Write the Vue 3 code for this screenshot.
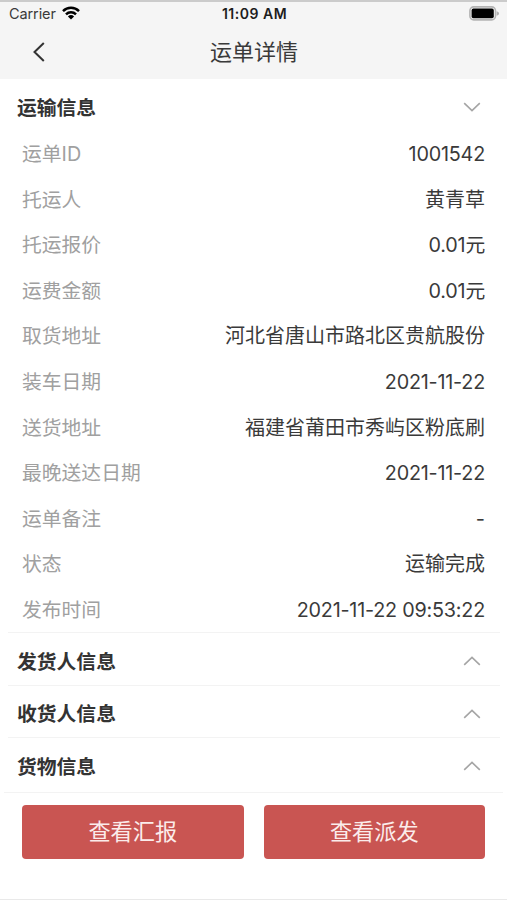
<script setup>
import { ref } from 'vue'

const sections = ref([
  {
    title: '运输信息',
    open: true,
    rows: [
      { label: '运单ID', value: '1001542' },
      { label: '托运人', value: '黄青草' },
      { label: '托运报价', value: '0.01元' },
      { label: '运费金额', value: '0.01元' },
      { label: '取货地址', value: '河北省唐山市路北区贵航股份' },
      { label: '装车日期', value: '2021-11-22' },
      { label: '送货地址', value: '福建省莆田市秀屿区粉底刷' },
      { label: '最晚送达日期', value: '2021-11-22' },
      { label: '运单备注', value: '-' },
      { label: '状态', value: '运输完成' },
      { label: '发布时间', value: '2021-11-22 09:53:22' },
    ],
  },
  { title: '发货人信息', open: false, rows: [] },
  { title: '收货人信息', open: false, rows: [] },
  { title: '货物信息', open: false, rows: [] },
])

function toggle(section) {
  section.open = !section.open
}

function isNumeric(value) {
  return /^\d/.test(value)
}
</script>

<template>
  <div class="page">
    <header class="top">
      <div class="status-bar">
        <div class="carrier">
          <span>Carrier</span>
          <svg class="wifi" viewBox="0 0 18 14">
            <g fill="none" stroke="#000" stroke-width="2.5">
              <path d="M1 5.1a11.4 11.4 0 0 1 16 0" />
              <path d="M4 8.4a7.1 7.1 0 0 1 10 0" />
            </g>
            <path d="M9 13.6 5.9 10.5a4.5 4.5 0 0 1 6.2 0z" />
          </svg>
        </div>
        <span class="time">11:09 AM</span>
        <svg class="battery" viewBox="0 0 31 15">
          <rect x="0.9" y="0.9" width="25.6" height="13" rx="3.8" fill="#f5f5f5" stroke="#b4b4b4" stroke-width="1.6" />
          <rect x="2.6" y="2.6" width="22.2" height="9.6" rx="1.8" />
          <path d="M27.6 5.2c1.8.5 2.4 1.3 2.4 2.3s-.6 1.8-2.4 2.3z" fill="#b0b0b0" />
        </svg>
      </div>
      <div class="nav-bar">
        <svg class="back" viewBox="0 0 12 20">
          <path d="M10.8 1 1.5 10l9.3 9" />
        </svg>
        <h1>运单详情</h1>
      </div>
    </header>

    <main>
      <section v-for="section in sections" :key="section.title" :class="{ open: section.open }">
        <div class="section-head" @click="toggle(section)">
          <h2>{{ section.title }}</h2>
          <svg class="arrow" :class="{ down: section.open }" viewBox="0 0 18 10">
            <path d="M1.2 8.8 9 1.4l7.8 7.4" />
          </svg>
        </div>
        <dl v-if="section.open">
          <div v-for="row in section.rows" :key="row.label" class="row">
            <dt>{{ row.label }}</dt>
            <dd :class="{ numeric: isNumeric(row.value) }">{{ row.value }}</dd>
          </div>
        </dl>
      </section>
    </main>

    <footer>
      <button type="button">查看汇报</button>
      <button type="button">查看派发</button>
    </footer>
  </div>
</template>

<style>
body {
  margin: 0;
}
</style>

<style scoped>
.page {
  display: flex;
  flex-direction: column;
  box-sizing: border-box;
  height: 900px;
  background: #fff;
  border-bottom: 1px solid #e9e9e9;
  font-family: Inter, 'Noto Sans CJK SC', sans-serif;
  color: #3a3a3a;
  overflow: hidden;
}

.top {
  box-sizing: border-box;
  height: 79px;
  border-top: 2px solid #cbcbcb;
  background: #f5f5f5;
  flex-shrink: 0;
}

.status-bar {
  display: grid;
  grid-template-columns: 1fr auto 1fr;
  align-items: center;
  height: 23px;
  padding: 0 7px 0 9px;
  font-size: 14.5px;
  line-height: 24px;
}

.carrier {
  display: flex;
  align-items: center;
  gap: 6px;
  letter-spacing: -0.1px;
}

.wifi {
  width: 18px;
  height: 14px;
  margin-top: -2px;
}

.time {
  font-size: 14px;
  font-weight: 600;
  letter-spacing: 0.5px;
  color: #1d1d1d;
}

.battery {
  width: 31px;
  height: 15px;
  margin-top: -1px;
  justify-self: end;
}

.nav-bar {
  display: grid;
  grid-template-columns: 1fr auto 1fr;
  align-items: center;
  height: 53px;
}

.back {
  width: 12px;
  height: 20px;
  margin-left: 33px;
  fill: none;
  stroke: #333;
  stroke-width: 2;
}

h1 {
  grid-column: 2;
  margin: 0;
  padding-left: 1px;
  font-size: 22px;
  font-weight: 400;
  line-height: 50px;
}

section {
  box-sizing: border-box;
  height: 52.7px;
  margin: 0 7px 0 8px;
  border-bottom: 1px solid #f3f3f3;
}

section.open {
  height: 554px;
}

section:last-child {
  height: 55px;
  margin: 0 4px;
  padding: 0 3px 0 4px;
}

.section-head {
  display: flex;
  align-items: center;
  justify-content: space-between;
  height: 52px;
  padding: 0 19px 0 9px;
}

h2 {
  margin: 0;
  padding-top: 5px;
  font-size: 19.8px;
  font-weight: 700;
  line-height: 52px;
  color: #333;
}

.arrow {
  width: 18px;
  height: 10px;
  margin-top: 4px;
  fill: none;
  stroke: #a5a5a5;
  stroke-width: 1.6;
}

.arrow.down {
  transform: rotate(180deg);
}

dl {
  margin: 0;
  padding: 1px 14px 0;
}

.row {
  display: flex;
  justify-content: space-between;
  height: 45.6px;
  font-size: 19.8px;
  line-height: 45.6px;
}

dt {
  color: #a0a0a0;
}

dd {
  margin: 0;
  padding-right: 1px;
  font-size: 20px;
}

dd.numeric {
  font-size: 19.8px;
  letter-spacing: -0.22px;
}

footer {
  display: flex;
  gap: 20px;
  padding: 12px 22px 0;
}

button {
  flex: 1;
  height: 54px;
  padding: 0;
  border: none;
  border-radius: 4px;
  background: #c95552;
  color: #fbeceb;
  font-family: inherit;
  font-size: 22.2px;
  line-height: 54px;
}
</style>
